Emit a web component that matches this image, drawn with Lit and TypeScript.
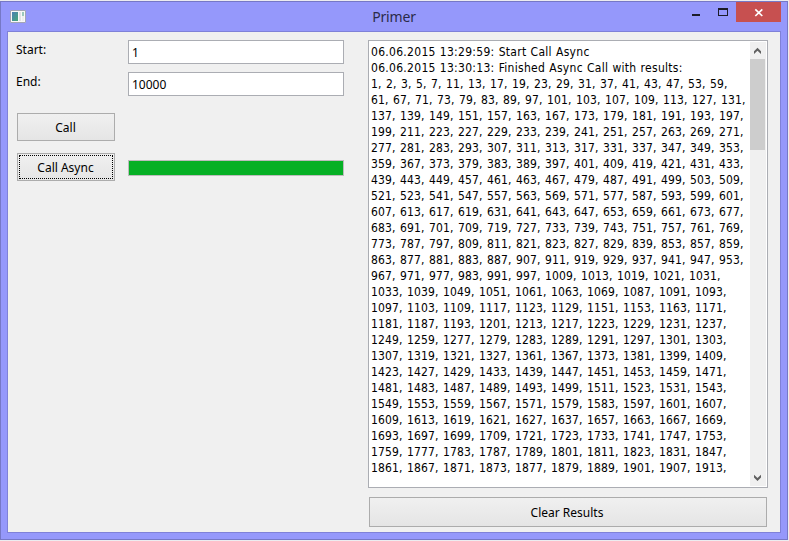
import { LitElement, html, css } from "lit";
import { customElement } from "lit/decorators.js";

const DIGIT = 7;
const PUNCT = 4;
const LINE_WIDTH = 376;

function primeLines(last: number): string[] {
  const lines: string[] = [];
  let line = "";
  let width = 0;
  for (let n = 1; n <= last; n++) {
    let prime = true;
    for (let d = 2; d * d <= n; d++) {
      if (n % d === 0) { prime = false; break; }
    }
    if (!prime) continue;
    const w = String(n).length * DIGIT + PUNCT;
    if (line && width + PUNCT + w > LINE_WIDTH) {
      lines.push(line);
      line = "";
      width = 0;
    }
    width += line ? PUNCT + w : w;
    line += (line ? " " : "") + n + ",";
  }
  lines.push(line);
  return lines;
}

@customElement("result-log")
export class ResultLog extends LitElement {
  static styles = css`
    :host { display: flex; box-sizing: border-box; width: 400px; height: 448px; background: #fff; border: 1px solid #abadb3; padding: 1px; }
    .text { flex: 1; overflow: hidden; padding: 2px 0 0 1px; font: 12px/16px "DejaVu Sans Condensed", "DejaVu Sans", sans-serif; font-stretch: condensed; letter-spacing: 0.13px; color: #000; }
    .line { white-space: pre; height: 16px; word-spacing: 0.89px; }
    .head { word-spacing: 0.4px; letter-spacing: 0.29px; }
    .bar { width: 16px; background: #f0f0f0; display: flex; flex-direction: column; }
    .arrow { display: block; width: 16px; height: 17px; }
    .thumb { height: 91px; width: 15px; background: #cdcdcd; }
    .track { flex: 1; }
  `;
  render() {
    return html`
      <div class="text">
        <div class="line head">06.06.2015 13:29:59: Start Call Async</div>
        <div class="line head">06.06.2015 13:30:13: Finished Async Call with results:</div>
        ${primeLines(1913).map((l) => html`<div class="line">${l}</div>`)}
      </div>
      <div class="bar">
        <svg class="arrow" viewBox="0 0 16 17"><path d="M4 9.3 7.5 5.8 11 9.3V12L7.5 8.8 4 12Z" fill="#606060" /></svg>
        <div class="thumb"></div>
        <div class="track"></div>
        <svg class="arrow" viewBox="0 0 16 17"><path d="M4 8.5 7.5 12 11 8.5V5.8L7.5 9 4 5.8Z" fill="#606060" /></svg>
      </div>
    `;
  }
}

@customElement("app-root")
export class AppRoot extends LitElement {
  static styles = css`
    :host { display: block; box-sizing: border-box; width: 789px; height: 541px; padding: 1px 1px 1px 0; background: #ececf0; overflow: hidden; font: 12px/16px "Noto Sans", "Open Sans", sans-serif; color: #000; }
    .window { box-sizing: border-box; width: 788px; height: 539px; background: #9598fb; border: 1px solid #7678c6; padding: 0 6px; }
    .title { display: grid; grid-template-columns: 135px 1fr 135px; height: 29px; }
    .appicon { display: block; width: 16px; height: 13px; margin: 8px 0 0 3px; }
    .name { text-align: center; font-size: 14px; line-height: 29px; letter-spacing: -0.15px; color: #2a2a48; }
    .controls { display: flex; justify-content: flex-end; }
    .controls svg { display: block; }
    .client { box-sizing: border-box; width: 774px; height: 502px; border: 1px solid #7f81d8; background: #f0f0f0; display: flex; padding: 8px 0 0 8px; }
    .form { width: 352px; }
    .row { display: grid; grid-template-columns: 112px 216px; height: 32px; }
    .label { padding-top: 2px; }
    .field { box-sizing: border-box; height: 24px; border: 1px solid #abadb3; background: #fff; padding: 4px 3px 0; }
    .button { box-sizing: border-box; border: 1px solid #acacac; background: linear-gradient(#f0f0f0, #e5e5e5); display: flex; align-items: center; justify-content: center; padding: 1px 1px 0 0; }
    .small { width: 98px; height: 28px; margin-left: 1px; }
    .call { margin: 9px 0 12px 1px; }
    .focused { padding: 1px; }
    .focus { box-sizing: border-box; flex: 1; align-self: stretch; border: 1px dotted #000; display: flex; align-items: center; justify-content: center; padding: 2px 1px 0 0; }
    .progress { box-sizing: border-box; width: 216px; height: 16px; margin-top: 7px; border: 1px solid #bcbcbc; background: #06b025; }
    .clear { width: 398px; height: 30px; margin: 9px 0 0 1px; padding-right: 2px; }
  `;
  render() {
    return html`
      <div class="window">
        <div class="title">
          <svg class="appicon" viewBox="0 0 16 13">
            <defs><linearGradient id="g" x2="1" y2="1"><stop stop-color="#4a7fb5" /><stop offset="1" stop-color="#46a878" /></linearGradient></defs>
            <rect x=".5" y=".5" width="15" height="12" rx=".5" fill="#f8f8f8" stroke="#a3a5b4" />
            <rect x="2" y="2" width="6" height="9" fill="url(#g)" />
            <rect x="9" y="2" width="2" height="9" fill="#e2e2e2" />
            <rect x="12" y="2" width="2" height="4" fill="#9cc9bc" />
            <rect x="12" y="6" width="2" height="5" fill="#eee" />
          </svg>
          <div class="name">Primer</div>
          <div class="controls">
            <svg width="49" height="20" viewBox="0 0 49 20">
              <path d="M5 12h8v2H5z" fill="#1c1c28" />
              <path fill-rule="evenodd" d="M31 6h10v8H31zM32 8v5h8V8z" fill="#1c1c28" />
            </svg>
            <svg width="45" height="20" viewBox="0 0 45 20">
              <rect width="45" height="20" fill="#c75050" />
              <path d="M19.3 7.3 26.3 14M26.3 7.3 19.3 14" stroke="#fff" stroke-width="1.7" />
            </svg>
          </div>
        </div>
        <div class="client">
          <div class="form">
            <div class="row"><div class="label">Start:</div><div class="field">1</div></div>
            <div class="row"><div class="label">End:</div><div class="field">10000</div></div>
            <div class="button small call">Call</div>
            <div class="row">
              <div class="button small focused"><div class="focus">Call Async</div></div>
              <div class="progress"></div>
            </div>
          </div>
          <div class="results">
            <result-log></result-log>
            <div class="button clear">Clear Results</div>
          </div>
        </div>
      </div>
    `;
  }
}
